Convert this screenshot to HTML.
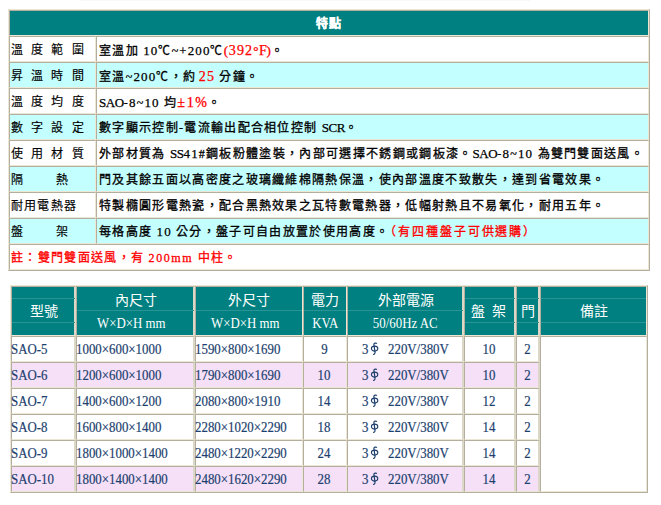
<!DOCTYPE html>
<html lang="zh-TW"><head><meta charset="utf-8"><title>SAO</title><style>
html,body{margin:0;padding:0;background:#fff;}
body{width:661px;height:505px;position:relative;overflow:hidden;font-family:"Liberation Serif",serif;}
.b{position:absolute;box-sizing:border-box;}
.t1,.t2{position:absolute;white-space:nowrap;}
.t1{font-size:12px;line-height:24px;height:24px;color:#000;letter-spacing:1.32px;-webkit-text-stroke:0.3px currentColor;}
.lab{letter-spacing:1.2px;word-spacing:0;-webkit-text-stroke:0.15px currentColor}
.lab{}
.hd{color:#fff;font-weight:bold;line-height:26px;height:26px}
.ls7{letter-spacing:8.2px}
.ls32{letter-spacing:33.2px}
.r{color:#ff0000}
.lt{letter-spacing:1.1px;font-size:1.0833em;-webkit-text-stroke:0.25px currentColor}
.la{letter-spacing:-0.4px;font-size:1.0833em;-webkit-text-stroke:0.25px currentColor}
.t2{font-size:14px;line-height:24px;height:24px;color:#1c3f6e;-webkit-text-stroke:0.2px currentColor;}
.wh{-webkit-text-stroke:0}
.wh{color:#fff}
.sx{display:inline-block;transform:scaleX(0.92);transform-origin:50% 50%;}
.sxl{display:inline-block;transform:scaleX(0.92);transform-origin:0 50%;}
.phi{font-size:15px;line-height:1px}
</style></head>
<body>
<div class="b" style="left:80px;top:0;width:450px;height:1px;background:#f8f8f8"></div>
<div class="b" style="left:8px;top:9px;width:642px;height:262px;background:#fff;border-top:1px solid #ece6d4;border-left:1px solid #ece6d4;border-bottom:1px solid #b4ae9e;border-right:1px solid #b4ae9e;"></div><div class="b" style="left:9px;top:10px;width:640px;height:26px;background:#008080;border-top:1px solid #b4ae9e;border-left:1px solid #b4ae9e;border-bottom:1px solid #ece6d4;border-right:1px solid #ece6d4;"></div><div class="t1 hd" style="left:9px;top:11px;width:640px;text-align:center;">特點</div><div class="b" style="left:9px;top:36px;width:87px;height:26px;background:#fff;border-top:1px solid #b4ae9e;border-left:1px solid #b4ae9e;border-bottom:1px solid #ece6d4;border-right:1px solid #ece6d4;"></div><div class="b" style="left:96px;top:36px;width:553px;height:26px;background:#fff;border-top:1px solid #b4ae9e;border-left:1px solid #b4ae9e;border-bottom:1px solid #ece6d4;border-right:1px solid #ece6d4;"></div><div class="t1 lab" style="left:11px;top:38px;"><span class=ls7>溫度範圍</span></div><div class="t1" style="left:99px;top:38px;">室溫加 <span class=lt>10</span>℃~+<span class=lt>200</span>℃<span class=r style="font-size:13px;letter-spacing:0.6px">(<span class=lt>392</span>°<span class=la>F</span>)</span>。</div><div class="b" style="left:9px;top:62px;width:87px;height:26px;background:#c4ffff;border-top:1px solid #b4ae9e;border-left:1px solid #b4ae9e;border-bottom:1px solid #ece6d4;border-right:1px solid #ece6d4;"></div><div class="b" style="left:96px;top:62px;width:553px;height:26px;background:#c4ffff;border-top:1px solid #b4ae9e;border-left:1px solid #b4ae9e;border-bottom:1px solid #ece6d4;border-right:1px solid #ece6d4;"></div><div class="t1 lab" style="left:11px;top:64px;"><span class=ls7>昇溫時間</span></div><div class="t1" style="left:99px;top:64px;">室溫~<span class=lt>200</span>℃，約<span class=r style="font-size:13px;margin-left:-2px"> <span class=lt>25</span></span> 分鐘。</div><div class="b" style="left:9px;top:88px;width:87px;height:26px;background:#fff;border-top:1px solid #b4ae9e;border-left:1px solid #b4ae9e;border-bottom:1px solid #ece6d4;border-right:1px solid #ece6d4;"></div><div class="b" style="left:96px;top:88px;width:553px;height:26px;background:#fff;border-top:1px solid #b4ae9e;border-left:1px solid #b4ae9e;border-bottom:1px solid #ece6d4;border-right:1px solid #ece6d4;"></div><div class="t1 lab" style="left:11px;top:90px;"><span class=ls7>溫度均度</span></div><div class="t1" style="left:99px;top:90px;"><span class=la>SAO</span>-<span class=lt>8</span>~<span class=lt>10</span> 均<span class=r style="letter-spacing:1.5px;font-size:14px">±<span class=lt>1</span>%</span>。</div><div class="b" style="left:9px;top:114px;width:87px;height:26px;background:#c4ffff;border-top:1px solid #b4ae9e;border-left:1px solid #b4ae9e;border-bottom:1px solid #ece6d4;border-right:1px solid #ece6d4;"></div><div class="b" style="left:96px;top:114px;width:553px;height:26px;background:#c4ffff;border-top:1px solid #b4ae9e;border-left:1px solid #b4ae9e;border-bottom:1px solid #ece6d4;border-right:1px solid #ece6d4;"></div><div class="t1 lab" style="left:11px;top:116px;"><span class=ls7>數字設定</span></div><div class="t1" style="left:99px;top:116px;">數字顯示控制-電流輸出配合相位控制 <span class=la>SCR</span>。</div><div class="b" style="left:9px;top:140px;width:87px;height:26px;background:#fff;border-top:1px solid #b4ae9e;border-left:1px solid #b4ae9e;border-bottom:1px solid #ece6d4;border-right:1px solid #ece6d4;"></div><div class="b" style="left:96px;top:140px;width:553px;height:26px;background:#fff;border-top:1px solid #b4ae9e;border-left:1px solid #b4ae9e;border-bottom:1px solid #ece6d4;border-right:1px solid #ece6d4;"></div><div class="t1 lab" style="left:11px;top:142px;"><span class=ls7>使用材質</span></div><div class="t1" style="left:99px;top:142px;">外部材質為 <span class=la>SS</span><span class=lt>41</span>#鋼板粉體塗裝，內部可選擇不銹鋼或鋼板漆。<span class=la>SAO</span>-<span class=lt>8</span>~<span class=lt>10</span> 為雙門雙面送風。</div><div class="b" style="left:9px;top:166px;width:87px;height:26px;background:#c4ffff;border-top:1px solid #b4ae9e;border-left:1px solid #b4ae9e;border-bottom:1px solid #ece6d4;border-right:1px solid #ece6d4;"></div><div class="b" style="left:96px;top:166px;width:553px;height:26px;background:#c4ffff;border-top:1px solid #b4ae9e;border-left:1px solid #b4ae9e;border-bottom:1px solid #ece6d4;border-right:1px solid #ece6d4;"></div><div class="t1 lab" style="left:11px;top:168px;"><span class=ls32>隔</span>熱</div><div class="t1" style="left:99px;top:168px;">門及其餘五面以高密度之玻璃纖維棉隔熱保溫，使內部溫度不致散失，達到省電效果。</div><div class="b" style="left:9px;top:192px;width:87px;height:26px;background:#fff;border-top:1px solid #b4ae9e;border-left:1px solid #b4ae9e;border-bottom:1px solid #ece6d4;border-right:1px solid #ece6d4;"></div><div class="b" style="left:96px;top:192px;width:553px;height:26px;background:#fff;border-top:1px solid #b4ae9e;border-left:1px solid #b4ae9e;border-bottom:1px solid #ece6d4;border-right:1px solid #ece6d4;"></div><div class="t1 lab" style="left:11px;top:194px;">耐用電熱器</div><div class="t1" style="left:99px;top:194px;">特製橢圓形電熱瓷，配合黑熱效果之瓦特數電熱器，低幅射熱且不易氧化，耐用五年。</div><div class="b" style="left:9px;top:218px;width:87px;height:26px;background:#c4ffff;border-top:1px solid #b4ae9e;border-left:1px solid #b4ae9e;border-bottom:1px solid #ece6d4;border-right:1px solid #ece6d4;"></div><div class="b" style="left:96px;top:218px;width:553px;height:26px;background:#c4ffff;border-top:1px solid #b4ae9e;border-left:1px solid #b4ae9e;border-bottom:1px solid #ece6d4;border-right:1px solid #ece6d4;"></div><div class="t1 lab" style="left:11px;top:220px;"><span class=ls32>盤</span>架</div><div class="t1" style="left:99px;top:220px;">每格高度 <span class=lt>10</span> 公分，盤子可自由放置於使用高度。<span class=r style="letter-spacing:1.9px;margin-left:1px">（有四種盤子可供選購）</span></div><div class="b" style="left:9px;top:244px;width:640px;height:26px;background:#fff;border-top:1px solid #b4ae9e;border-left:1px solid #b4ae9e;border-bottom:1px solid #ece6d4;border-right:1px solid #ece6d4;"></div><div class="t1" style="left:11px;top:246px;"><span class=r>註：雙門雙面送風，有 </span><span class=r style="letter-spacing:1.6px">200mm</span><span class=r> 中柱。</span></div><div class="b" style="left:10px;top:285px;width:638px;height:208px;background:#fff;border-top:1px solid #ece6d4;border-left:1px solid #ece6d4;border-bottom:1px solid #b4ae9e;border-right:1px solid #b4ae9e;"></div><div class="b" style="left:11px;top:286px;width:65px;height:50px;background:#008080;border-top:1px solid #b4ae9e;border-left:1px solid #b4ae9e;border-bottom:1px solid #ece6d4;border-right:2px solid #ece6d4;border-right-color:#dcd8c8;"></div><div class="b" style="left:76px;top:286px;width:119px;height:50px;background:#008080;border-top:1px solid #b4ae9e;border-left:1px solid #b4ae9e;border-bottom:1px solid #ece6d4;border-right:2px solid #ece6d4;border-right-color:#dcd8c8;"></div><div class="b" style="left:195px;top:286px;width:108px;height:50px;background:#008080;border-top:1px solid #b4ae9e;border-left:1px solid #b4ae9e;border-bottom:1px solid #ece6d4;border-right:1px solid #ece6d4;"></div><div class="b" style="left:303px;top:286px;width:44px;height:50px;background:#008080;border-top:1px solid #b4ae9e;border-left:1px solid #b4ae9e;border-bottom:1px solid #ece6d4;border-right:1px solid #ece6d4;"></div><div class="b" style="left:347px;top:286px;width:117px;height:50px;background:#008080;border-top:1px solid #b4ae9e;border-left:1px solid #b4ae9e;border-bottom:1px solid #ece6d4;border-right:2px solid #ece6d4;border-right-color:#dcd8c8;"></div><div class="b" style="left:464px;top:286px;width:52px;height:50px;background:#008080;border-top:1px solid #b4ae9e;border-left:1px solid #b4ae9e;border-bottom:1px solid #ece6d4;border-right:2px solid #ece6d4;border-right-color:#dcd8c8;"></div><div class="b" style="left:516px;top:286px;width:24px;height:50px;background:#008080;border-top:1px solid #b4ae9e;border-left:1px solid #b4ae9e;border-bottom:1px solid #ece6d4;border-right:2px solid #ece6d4;border-right-color:#dcd8c8;"></div><div class="b" style="left:540px;top:286px;width:107px;height:50px;background:#008080;border-top:1px solid #b4ae9e;border-left:1px solid #b4ae9e;border-bottom:1px solid #ece6d4;border-right:1px solid #ece6d4;"></div><div class="b" style="left:12px;top:298px;width:63px;height:1px;background:#2a9494"></div><div class="b" style="left:12px;top:322px;width:63px;height:1px;background:#2a9494"></div><div class="b" style="left:465px;top:298px;width:50px;height:1px;background:#2a9494"></div><div class="b" style="left:465px;top:322px;width:50px;height:1px;background:#2a9494"></div><div class="b" style="left:517px;top:298px;width:22px;height:1px;background:#2a9494"></div><div class="b" style="left:517px;top:322px;width:22px;height:1px;background:#2a9494"></div><div class="b" style="left:541px;top:298px;width:105px;height:1px;background:#2a9494"></div><div class="b" style="left:541px;top:322px;width:105px;height:1px;background:#2a9494"></div><div class="b" style="left:77px;top:310px;width:117px;height:1px;background:#2a9494"></div><div class="b" style="left:196px;top:310px;width:106px;height:1px;background:#2a9494"></div><div class="b" style="left:304px;top:310px;width:42px;height:1px;background:#2a9494"></div><div class="b" style="left:348px;top:310px;width:115px;height:1px;background:#2a9494"></div><div class="t2 wh" style="left:12px;top:300px;width:63px;text-align:center;height:24px;line-height:24px;">型號</div><div class="t2 wh" style="left:77px;top:289px;width:117px;text-align:center;height:24px;line-height:24px;">內尺寸</div><div class="t2 wh" style="left:77px;top:312px;width:117px;text-align:center;height:24px;line-height:24px;"><span class=sx>W×D×H mm</span><span style="display:inline-block;width:8px"></span></div><div class="t2 wh" style="left:196px;top:289px;width:106px;text-align:center;height:24px;line-height:24px;">外尺寸</div><div class="t2 wh" style="left:196px;top:312px;width:106px;text-align:center;height:24px;line-height:24px;"><span class=sx>W×D×H mm</span><span style="display:inline-block;width:8px"></span></div><div class="t2 wh" style="left:304px;top:289px;width:42px;text-align:center;height:24px;line-height:24px;">電力</div><div class="t2 wh" style="left:304px;top:312px;width:42px;text-align:center;height:24px;line-height:24px;"><span class=sx>KVA</span></div><div class="t2 wh" style="left:348px;top:289px;width:115px;text-align:center;height:24px;line-height:24px;">外部電源</div><div class="t2 wh" style="left:348px;top:312px;width:115px;text-align:center;height:24px;line-height:24px;"><span class=sx>50/60Hz AC</span></div><div class="t2 wh" style="left:465px;top:300px;width:50px;text-align:center;height:24px;line-height:24px;">盤<span style="display:inline-block;width:7px"></span>架<span style="display:inline-block;width:4px"></span></div><div class="t2 wh" style="left:517px;top:300px;width:22px;text-align:center;height:24px;line-height:24px;">門</div><div class="t2 wh" style="left:541px;top:300px;width:105px;text-align:center;height:24px;line-height:24px;">備註</div><div class="b" style="left:11px;top:336px;width:65px;height:26px;background:#fff;border-top:1px solid #b4ae9e;border-left:1px solid #b4ae9e;border-bottom:1px solid #ece6d4;border-right:2px solid #ece6d4;border-right-color:#dcd8c8;"></div><div class="b" style="left:76px;top:336px;width:119px;height:26px;background:#fff;border-top:1px solid #b4ae9e;border-left:1px solid #b4ae9e;border-bottom:1px solid #ece6d4;border-right:2px solid #ece6d4;border-right-color:#dcd8c8;"></div><div class="b" style="left:195px;top:336px;width:108px;height:26px;background:#fff;border-top:1px solid #b4ae9e;border-left:1px solid #b4ae9e;border-bottom:1px solid #ece6d4;border-right:1px solid #ece6d4;"></div><div class="b" style="left:303px;top:336px;width:44px;height:26px;background:#fff;border-top:1px solid #b4ae9e;border-left:1px solid #b4ae9e;border-bottom:1px solid #ece6d4;border-right:1px solid #ece6d4;"></div><div class="b" style="left:347px;top:336px;width:117px;height:26px;background:#fff;border-top:1px solid #b4ae9e;border-left:1px solid #b4ae9e;border-bottom:1px solid #ece6d4;border-right:2px solid #ece6d4;border-right-color:#dcd8c8;"></div><div class="b" style="left:464px;top:336px;width:52px;height:26px;background:#fff;border-top:1px solid #b4ae9e;border-left:1px solid #b4ae9e;border-bottom:1px solid #ece6d4;border-right:2px solid #ece6d4;border-right-color:#dcd8c8;"></div><div class="b" style="left:516px;top:336px;width:24px;height:26px;background:#fff;border-top:1px solid #b4ae9e;border-left:1px solid #b4ae9e;border-bottom:1px solid #ece6d4;border-right:2px solid #ece6d4;border-right-color:#dcd8c8;"></div><div class="t2" style="left:11px;top:338px;"><span class=sxl>SAO-5</span></div><div class="t2" style="left:76px;top:338px;"><span class=sxl>1000×600×1000</span></div><div class="t2" style="left:195px;top:338px;"><span class=sxl>1590×800×1690</span></div><div class="t2" style="left:303px;top:338px;width:42px;text-align:center;"><span class=sx>9</span></div><div class="t2" style="left:464px;top:338px;width:50px;text-align:center;"><span class=sx>10</span></div><div class="t2" style="left:516px;top:338px;width:22px;text-align:center;"><span class=sx>2</span></div><div class="t2" style="left:362px;top:338px;"><span class=sxl>3</span></div><svg class="b" style="left:370px;top:342px" width="10" height="14" viewBox="0 0 10 14"><ellipse cx="4.6" cy="6.6" rx="3.2" ry="2.5" fill="none" stroke="#1c3f6e" stroke-width="1.1"/><path d="M6.9,1.6 C6,0.7 3.7,0.9 3.9,2.7 L5,9.8 C5.2,11.3 4.5,12.7 3.1,12.4" fill="none" stroke="#1c3f6e" stroke-width="1.2"/></svg><div class="t2" style="left:388px;top:338px;"><span class=sxl>220V/380V</span></div><div class="b" style="left:11px;top:362px;width:65px;height:26px;background:#f5e0f8;border-top:1px solid #b4ae9e;border-left:1px solid #b4ae9e;border-bottom:1px solid #ece6d4;border-right:2px solid #ece6d4;border-right-color:#dcd8c8;"></div><div class="b" style="left:76px;top:362px;width:119px;height:26px;background:#f5e0f8;border-top:1px solid #b4ae9e;border-left:1px solid #b4ae9e;border-bottom:1px solid #ece6d4;border-right:2px solid #ece6d4;border-right-color:#dcd8c8;"></div><div class="b" style="left:195px;top:362px;width:108px;height:26px;background:#f5e0f8;border-top:1px solid #b4ae9e;border-left:1px solid #b4ae9e;border-bottom:1px solid #ece6d4;border-right:1px solid #ece6d4;"></div><div class="b" style="left:303px;top:362px;width:44px;height:26px;background:#f5e0f8;border-top:1px solid #b4ae9e;border-left:1px solid #b4ae9e;border-bottom:1px solid #ece6d4;border-right:1px solid #ece6d4;"></div><div class="b" style="left:347px;top:362px;width:117px;height:26px;background:#f5e0f8;border-top:1px solid #b4ae9e;border-left:1px solid #b4ae9e;border-bottom:1px solid #ece6d4;border-right:2px solid #ece6d4;border-right-color:#dcd8c8;"></div><div class="b" style="left:464px;top:362px;width:52px;height:26px;background:#f5e0f8;border-top:1px solid #b4ae9e;border-left:1px solid #b4ae9e;border-bottom:1px solid #ece6d4;border-right:2px solid #ece6d4;border-right-color:#dcd8c8;"></div><div class="b" style="left:516px;top:362px;width:24px;height:26px;background:#f5e0f8;border-top:1px solid #b4ae9e;border-left:1px solid #b4ae9e;border-bottom:1px solid #ece6d4;border-right:2px solid #ece6d4;border-right-color:#dcd8c8;"></div><div class="t2" style="left:11px;top:364px;"><span class=sxl>SAO-6</span></div><div class="t2" style="left:76px;top:364px;"><span class=sxl>1200×600×1000</span></div><div class="t2" style="left:195px;top:364px;"><span class=sxl>1790×800×1690</span></div><div class="t2" style="left:303px;top:364px;width:42px;text-align:center;"><span class=sx>10</span></div><div class="t2" style="left:464px;top:364px;width:50px;text-align:center;"><span class=sx>10</span></div><div class="t2" style="left:516px;top:364px;width:22px;text-align:center;"><span class=sx>2</span></div><div class="t2" style="left:362px;top:364px;"><span class=sxl>3</span></div><svg class="b" style="left:370px;top:368px" width="10" height="14" viewBox="0 0 10 14"><ellipse cx="4.6" cy="6.6" rx="3.2" ry="2.5" fill="none" stroke="#1c3f6e" stroke-width="1.1"/><path d="M6.9,1.6 C6,0.7 3.7,0.9 3.9,2.7 L5,9.8 C5.2,11.3 4.5,12.7 3.1,12.4" fill="none" stroke="#1c3f6e" stroke-width="1.2"/></svg><div class="t2" style="left:388px;top:364px;"><span class=sxl>220V/380V</span></div><div class="b" style="left:11px;top:388px;width:65px;height:26px;background:#fff;border-top:1px solid #b4ae9e;border-left:1px solid #b4ae9e;border-bottom:1px solid #ece6d4;border-right:2px solid #ece6d4;border-right-color:#dcd8c8;"></div><div class="b" style="left:76px;top:388px;width:119px;height:26px;background:#fff;border-top:1px solid #b4ae9e;border-left:1px solid #b4ae9e;border-bottom:1px solid #ece6d4;border-right:2px solid #ece6d4;border-right-color:#dcd8c8;"></div><div class="b" style="left:195px;top:388px;width:108px;height:26px;background:#fff;border-top:1px solid #b4ae9e;border-left:1px solid #b4ae9e;border-bottom:1px solid #ece6d4;border-right:1px solid #ece6d4;"></div><div class="b" style="left:303px;top:388px;width:44px;height:26px;background:#fff;border-top:1px solid #b4ae9e;border-left:1px solid #b4ae9e;border-bottom:1px solid #ece6d4;border-right:1px solid #ece6d4;"></div><div class="b" style="left:347px;top:388px;width:117px;height:26px;background:#fff;border-top:1px solid #b4ae9e;border-left:1px solid #b4ae9e;border-bottom:1px solid #ece6d4;border-right:2px solid #ece6d4;border-right-color:#dcd8c8;"></div><div class="b" style="left:464px;top:388px;width:52px;height:26px;background:#fff;border-top:1px solid #b4ae9e;border-left:1px solid #b4ae9e;border-bottom:1px solid #ece6d4;border-right:2px solid #ece6d4;border-right-color:#dcd8c8;"></div><div class="b" style="left:516px;top:388px;width:24px;height:26px;background:#fff;border-top:1px solid #b4ae9e;border-left:1px solid #b4ae9e;border-bottom:1px solid #ece6d4;border-right:2px solid #ece6d4;border-right-color:#dcd8c8;"></div><div class="t2" style="left:11px;top:390px;"><span class=sxl>SAO-7</span></div><div class="t2" style="left:76px;top:390px;"><span class=sxl>1400×600×1200</span></div><div class="t2" style="left:195px;top:390px;"><span class=sxl>2080×800×1910</span></div><div class="t2" style="left:303px;top:390px;width:42px;text-align:center;"><span class=sx>14</span></div><div class="t2" style="left:464px;top:390px;width:50px;text-align:center;"><span class=sx>12</span></div><div class="t2" style="left:516px;top:390px;width:22px;text-align:center;"><span class=sx>2</span></div><div class="t2" style="left:362px;top:390px;"><span class=sxl>3</span></div><svg class="b" style="left:370px;top:394px" width="10" height="14" viewBox="0 0 10 14"><ellipse cx="4.6" cy="6.6" rx="3.2" ry="2.5" fill="none" stroke="#1c3f6e" stroke-width="1.1"/><path d="M6.9,1.6 C6,0.7 3.7,0.9 3.9,2.7 L5,9.8 C5.2,11.3 4.5,12.7 3.1,12.4" fill="none" stroke="#1c3f6e" stroke-width="1.2"/></svg><div class="t2" style="left:388px;top:390px;"><span class=sxl>220V/380V</span></div><div class="b" style="left:11px;top:414px;width:65px;height:26px;background:#fff;border-top:1px solid #b4ae9e;border-left:1px solid #b4ae9e;border-bottom:1px solid #ece6d4;border-right:2px solid #ece6d4;border-right-color:#dcd8c8;"></div><div class="b" style="left:76px;top:414px;width:119px;height:26px;background:#fff;border-top:1px solid #b4ae9e;border-left:1px solid #b4ae9e;border-bottom:1px solid #ece6d4;border-right:2px solid #ece6d4;border-right-color:#dcd8c8;"></div><div class="b" style="left:195px;top:414px;width:108px;height:26px;background:#fff;border-top:1px solid #b4ae9e;border-left:1px solid #b4ae9e;border-bottom:1px solid #ece6d4;border-right:1px solid #ece6d4;"></div><div class="b" style="left:303px;top:414px;width:44px;height:26px;background:#fff;border-top:1px solid #b4ae9e;border-left:1px solid #b4ae9e;border-bottom:1px solid #ece6d4;border-right:1px solid #ece6d4;"></div><div class="b" style="left:347px;top:414px;width:117px;height:26px;background:#fff;border-top:1px solid #b4ae9e;border-left:1px solid #b4ae9e;border-bottom:1px solid #ece6d4;border-right:2px solid #ece6d4;border-right-color:#dcd8c8;"></div><div class="b" style="left:464px;top:414px;width:52px;height:26px;background:#fff;border-top:1px solid #b4ae9e;border-left:1px solid #b4ae9e;border-bottom:1px solid #ece6d4;border-right:2px solid #ece6d4;border-right-color:#dcd8c8;"></div><div class="b" style="left:516px;top:414px;width:24px;height:26px;background:#fff;border-top:1px solid #b4ae9e;border-left:1px solid #b4ae9e;border-bottom:1px solid #ece6d4;border-right:2px solid #ece6d4;border-right-color:#dcd8c8;"></div><div class="t2" style="left:11px;top:416px;"><span class=sxl>SAO-8</span></div><div class="t2" style="left:76px;top:416px;"><span class=sxl>1600×800×1400</span></div><div class="t2" style="left:195px;top:416px;"><span class=sxl>2280×1020×2290</span></div><div class="t2" style="left:303px;top:416px;width:42px;text-align:center;"><span class=sx>18</span></div><div class="t2" style="left:464px;top:416px;width:50px;text-align:center;"><span class=sx>14</span></div><div class="t2" style="left:516px;top:416px;width:22px;text-align:center;"><span class=sx>2</span></div><div class="t2" style="left:362px;top:416px;"><span class=sxl>3</span></div><svg class="b" style="left:370px;top:420px" width="10" height="14" viewBox="0 0 10 14"><ellipse cx="4.6" cy="6.6" rx="3.2" ry="2.5" fill="none" stroke="#1c3f6e" stroke-width="1.1"/><path d="M6.9,1.6 C6,0.7 3.7,0.9 3.9,2.7 L5,9.8 C5.2,11.3 4.5,12.7 3.1,12.4" fill="none" stroke="#1c3f6e" stroke-width="1.2"/></svg><div class="t2" style="left:388px;top:416px;"><span class=sxl>220V/380V</span></div><div class="b" style="left:11px;top:440px;width:65px;height:26px;background:#fff;border-top:1px solid #b4ae9e;border-left:1px solid #b4ae9e;border-bottom:1px solid #ece6d4;border-right:2px solid #ece6d4;border-right-color:#dcd8c8;"></div><div class="b" style="left:76px;top:440px;width:119px;height:26px;background:#fff;border-top:1px solid #b4ae9e;border-left:1px solid #b4ae9e;border-bottom:1px solid #ece6d4;border-right:2px solid #ece6d4;border-right-color:#dcd8c8;"></div><div class="b" style="left:195px;top:440px;width:108px;height:26px;background:#fff;border-top:1px solid #b4ae9e;border-left:1px solid #b4ae9e;border-bottom:1px solid #ece6d4;border-right:1px solid #ece6d4;"></div><div class="b" style="left:303px;top:440px;width:44px;height:26px;background:#fff;border-top:1px solid #b4ae9e;border-left:1px solid #b4ae9e;border-bottom:1px solid #ece6d4;border-right:1px solid #ece6d4;"></div><div class="b" style="left:347px;top:440px;width:117px;height:26px;background:#fff;border-top:1px solid #b4ae9e;border-left:1px solid #b4ae9e;border-bottom:1px solid #ece6d4;border-right:2px solid #ece6d4;border-right-color:#dcd8c8;"></div><div class="b" style="left:464px;top:440px;width:52px;height:26px;background:#fff;border-top:1px solid #b4ae9e;border-left:1px solid #b4ae9e;border-bottom:1px solid #ece6d4;border-right:2px solid #ece6d4;border-right-color:#dcd8c8;"></div><div class="b" style="left:516px;top:440px;width:24px;height:26px;background:#fff;border-top:1px solid #b4ae9e;border-left:1px solid #b4ae9e;border-bottom:1px solid #ece6d4;border-right:2px solid #ece6d4;border-right-color:#dcd8c8;"></div><div class="t2" style="left:11px;top:442px;"><span class=sxl>SAO-9</span></div><div class="t2" style="left:76px;top:442px;"><span class=sxl>1800×1000×1400</span></div><div class="t2" style="left:195px;top:442px;"><span class=sxl>2480×1220×2290</span></div><div class="t2" style="left:303px;top:442px;width:42px;text-align:center;"><span class=sx>24</span></div><div class="t2" style="left:464px;top:442px;width:50px;text-align:center;"><span class=sx>14</span></div><div class="t2" style="left:516px;top:442px;width:22px;text-align:center;"><span class=sx>2</span></div><div class="t2" style="left:362px;top:442px;"><span class=sxl>3</span></div><svg class="b" style="left:370px;top:446px" width="10" height="14" viewBox="0 0 10 14"><ellipse cx="4.6" cy="6.6" rx="3.2" ry="2.5" fill="none" stroke="#1c3f6e" stroke-width="1.1"/><path d="M6.9,1.6 C6,0.7 3.7,0.9 3.9,2.7 L5,9.8 C5.2,11.3 4.5,12.7 3.1,12.4" fill="none" stroke="#1c3f6e" stroke-width="1.2"/></svg><div class="t2" style="left:388px;top:442px;"><span class=sxl>220V/380V</span></div><div class="b" style="left:11px;top:466px;width:65px;height:26px;background:#f5e0f8;border-top:1px solid #b4ae9e;border-left:1px solid #b4ae9e;border-bottom:1px solid #ece6d4;border-right:2px solid #ece6d4;border-right-color:#dcd8c8;"></div><div class="b" style="left:76px;top:466px;width:119px;height:26px;background:#f5e0f8;border-top:1px solid #b4ae9e;border-left:1px solid #b4ae9e;border-bottom:1px solid #ece6d4;border-right:2px solid #ece6d4;border-right-color:#dcd8c8;"></div><div class="b" style="left:195px;top:466px;width:108px;height:26px;background:#f5e0f8;border-top:1px solid #b4ae9e;border-left:1px solid #b4ae9e;border-bottom:1px solid #ece6d4;border-right:1px solid #ece6d4;"></div><div class="b" style="left:303px;top:466px;width:44px;height:26px;background:#f5e0f8;border-top:1px solid #b4ae9e;border-left:1px solid #b4ae9e;border-bottom:1px solid #ece6d4;border-right:1px solid #ece6d4;"></div><div class="b" style="left:347px;top:466px;width:117px;height:26px;background:#f5e0f8;border-top:1px solid #b4ae9e;border-left:1px solid #b4ae9e;border-bottom:1px solid #ece6d4;border-right:2px solid #ece6d4;border-right-color:#dcd8c8;"></div><div class="b" style="left:464px;top:466px;width:52px;height:26px;background:#f5e0f8;border-top:1px solid #b4ae9e;border-left:1px solid #b4ae9e;border-bottom:1px solid #ece6d4;border-right:2px solid #ece6d4;border-right-color:#dcd8c8;"></div><div class="b" style="left:516px;top:466px;width:24px;height:26px;background:#f5e0f8;border-top:1px solid #b4ae9e;border-left:1px solid #b4ae9e;border-bottom:1px solid #ece6d4;border-right:2px solid #ece6d4;border-right-color:#dcd8c8;"></div><div class="t2" style="left:11px;top:468px;"><span class=sxl>SAO-10</span></div><div class="t2" style="left:76px;top:468px;"><span class=sxl>1800×1400×1400</span></div><div class="t2" style="left:195px;top:468px;"><span class=sxl>2480×1620×2290</span></div><div class="t2" style="left:303px;top:468px;width:42px;text-align:center;"><span class=sx>28</span></div><div class="t2" style="left:464px;top:468px;width:50px;text-align:center;"><span class=sx>14</span></div><div class="t2" style="left:516px;top:468px;width:22px;text-align:center;"><span class=sx>2</span></div><div class="t2" style="left:362px;top:468px;"><span class=sxl>3</span></div><svg class="b" style="left:370px;top:472px" width="10" height="14" viewBox="0 0 10 14"><ellipse cx="4.6" cy="6.6" rx="3.2" ry="2.5" fill="none" stroke="#1c3f6e" stroke-width="1.1"/><path d="M6.9,1.6 C6,0.7 3.7,0.9 3.9,2.7 L5,9.8 C5.2,11.3 4.5,12.7 3.1,12.4" fill="none" stroke="#1c3f6e" stroke-width="1.2"/></svg><div class="t2" style="left:388px;top:468px;"><span class=sxl>220V/380V</span></div><div class="b" style="left:540px;top:336px;width:107px;height:156px;background:#fff;border-top:1px solid #b4ae9e;border-left:1px solid #b4ae9e;border-bottom:1px solid #ece6d4;border-right:1px solid #ece6d4;"></div>
</body></html>
